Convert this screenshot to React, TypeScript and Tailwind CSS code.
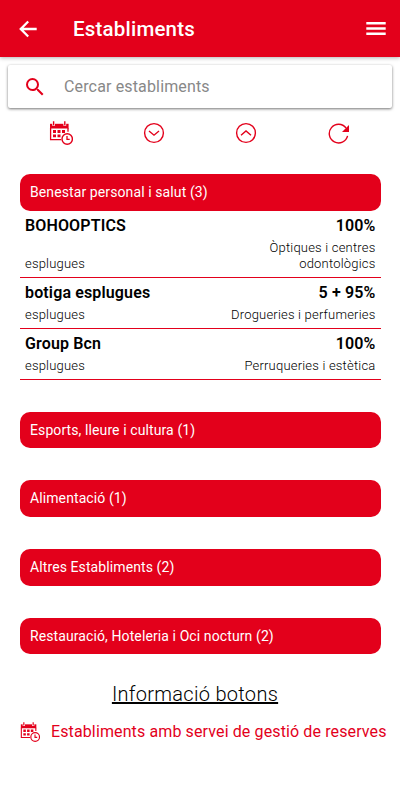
import type { ReactNode } from 'react';

const sections = [
  {
    title: 'Benestar personal i salut',
    count: 3,
    items: [
      { name: 'BOHOOPTICS', offer: '100%', city: 'esplugues', category: 'Òptiques i centres odontològics' },
      { name: 'botiga esplugues', offer: '5 + 95%', city: 'esplugues', category: 'Drogueries i perfumeries' },
      { name: 'Group Bcn', offer: '100%', city: 'esplugues', category: 'Perruqueries i estètica' },
    ],
  },
  { title: 'Esports, lleure i cultura', count: 1, items: [] },
  { title: 'Alimentació', count: 1, items: [] },
  { title: 'Altres Establiments', count: 2, items: [] },
  { title: 'Restauració, Hoteleria i Oci nocturn', count: 2, items: [] },
];

function CalendarIcon({ className }: { className?: string }) {
  return (
    <svg viewBox="0 0 24 24" className={className} fill="none" stroke="currentColor">
      <path d="M1 2.8h18.6v4.7H1z" fill="currentColor" stroke="none" />
      <path d="M4.6 0v4.8M15.8 0v4.8" stroke="#fff" strokeWidth="2.8" />
      <path d="M4.6 0.2v4M15.8 0.2v4" strokeWidth="1.4" />
      <path d="M1.6 7v11.6h10.6M19 7v3.8" strokeWidth="1.3" />
      <path d="M4 9h3v2.9H4zM8.5 9h3v2.9h-3zM13 9h3v2.9h-3zM4 13.4h3v2.9H4zM8.5 13.4h3v2.9h-3z" fill="currentColor" stroke="none" />
      <circle cx="18.2" cy="18" r="5.2" fill="#fff" strokeWidth="1.4" />
      <path d="M18 14.9v3.5h2.7" strokeWidth="1.3" />
    </svg>
  );
}

function RoundIcon({ children }: { children: ReactNode }) {
  return (
    <svg viewBox="0 0 22 22" className="w-[22px] h-[22px]" fill="none" stroke="currentColor" strokeWidth="1.4">
      {children}
    </svg>
  );
}

function SectionTitle({ title, count }: { title: string; count: number }) {
  return (
    <button className="flex h-[36.7px] w-full items-center rounded-[10px] bg-[#e3001b] px-[10px] text-left text-[14px] tracking-[0.1px] text-white">
      {title} ({count})
    </button>
  );
}

export default function App() {
  return (
    <div className="flex h-[800px] w-[400px] flex-col overflow-hidden bg-white font-[Roboto,sans-serif] text-black">
      <header className="flex h-[57px] shrink-0 items-center bg-[#e3001b] pl-4 pr-3 text-white shadow-[0_1px_4px_rgba(0,0,0,0.3)]">
        <svg viewBox="0 0 24 24" className="size-6" fill="currentColor">
          <path d="M20.7 10.7H7.6l5.4-5.4-1.6-1.6L3.1 12l8.3 8.3 1.6-1.6-5.4-5.4h13.1z" />
        </svg>
        <h1 className="ml-[33px] flex-1 text-[20.5px] font-medium leading-6 tracking-[0.2px]">Establiments</h1>
        <svg viewBox="0 0 24 24" className="size-6" fill="currentColor">
          <path d="M2.3 5h19.4v2.5H2.3zM2.3 10.2h19.4v2.5H2.3zM2.3 15.4h19.4v2.5H2.3z" />
        </svg>
      </header>

      <div className="mx-2 mt-2 flex h-[43px] shrink-0 items-center rounded-[2px] bg-white pl-[15px] shadow-[0_1px_3px_rgba(0,0,0,0.55)]">
        <svg viewBox="0 0 24 24" className="size-6 text-[#e3001b]" fill="currentColor">
          <path d="M15.5 14h-.79l-.28-.27A6.47 6.47 0 0 0 16 9.5 6.5 6.5 0 1 0 9.5 16c1.61 0 3.09-.59 4.23-1.57l.27.28v.79l5 4.99L20.49 19zm-6 0C7.01 14 5 11.99 5 9.5S7.01 5 9.5 5 14 7.01 14 9.5 11.99 14 9.5 14" />
        </svg>
        <span className="ml-[17px] text-[16px] tracking-[0.15px] text-[#888]">Cercar establiments</span>
      </div>

      <div className="mx-[15px] mt-[13px] grid h-6 shrink-0 grid-cols-4 items-center justify-items-center text-[#e3001b]">
        <CalendarIcon className="size-6" />
        <RoundIcon>
          <circle cx="11" cy="11" r="9.4" />
          <path d="M6 9l5 4.2L16 9" />
        </RoundIcon>
        <RoundIcon>
          <circle cx="11" cy="11" r="9.4" />
          <path d="M6 13.2L11 9l5 4.2" />
        </RoundIcon>
        <RoundIcon>
          <path d="M18 6A9.3 9.3 0 1 0 19.6 13.9" />
          <path d="M21 3v6.9h-7z" fill="currentColor" stroke="none" />
        </RoundIcon>
      </div>

      <main className="mt-[29px] flex shrink-0 flex-col gap-8 pl-5 pr-[19.5px]">
        {sections.map((section) => (
          <section key={section.title}>
            <SectionTitle title={section.title} count={section.count} />
            {section.items.map((item) => (
              <div key={item.name} className="border-b border-[#e3001b] px-[5px] pb-[5px] pt-[5px]">
                <div className="flex justify-between text-[16px] font-semibold leading-5 tracking-[0.14px]">
                  <span>{item.name}</span>
                  <span>{item.offer}</span>
                </div>
                <div className="mt-[4px] flex items-end justify-between text-[13px] font-light leading-4 tracking-[0.2px]">
                  <span>{item.city}</span>
                  <span className="max-w-[150px] text-right">{item.category}</span>
                </div>
              </div>
            ))}
          </section>
        ))}
      </main>

      <h2 className="mt-[27px] shrink-0 pr-[10px] text-center text-[20px] font-light leading-[26px] tracking-[0.3px] underline">Informació botons</h2>
      <div className="mt-[13px] flex shrink-0 items-center pl-5 text-[#e3001b]">
        <CalendarIcon className="size-5" />
        <span className="ml-[11px] whitespace-nowrap text-[16px] leading-6 tracking-[0.12px]">Establiments amb servei de gestió de reserves</span>
      </div>
    </div>
  );
}
